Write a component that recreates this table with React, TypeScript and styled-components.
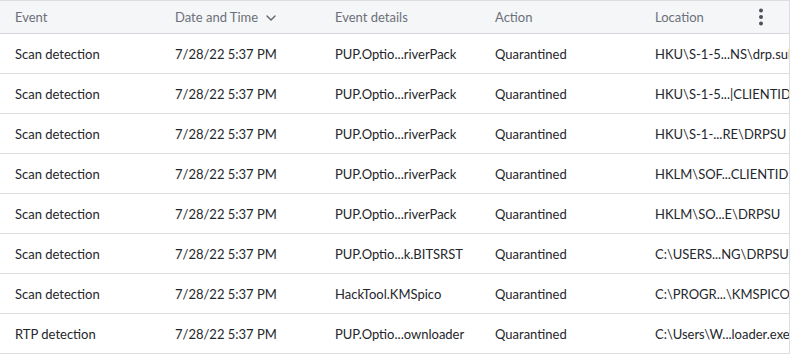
import React from 'react';
import styled, { createGlobalStyle } from 'styled-components';

const GlobalStyle = createGlobalStyle`
  html, body {
    margin: 0;
    padding: 0;
    background: #ffffff;
    font-family: Lato, 'Noto Sans', sans-serif;
  }
`;

type Row = {
  event: string;
  date: string;
  details: string;
  action: string;
  location: string;
};

const rows: Row[] = [
  { event: 'Scan detection', date: '7/28/22 5:37 PM', details: 'PUP.Optio...riverPack', action: 'Quarantined', location: 'HKU\\S-1-5...NS\\drp.sub' },
  { event: 'Scan detection', date: '7/28/22 5:37 PM', details: 'PUP.Optio...riverPack', action: 'Quarantined', location: 'HKU\\S-1-5...|CLIENTID' },
  { event: 'Scan detection', date: '7/28/22 5:37 PM', details: 'PUP.Optio...riverPack', action: 'Quarantined', location: 'HKU\\S-1-...RE\\DRPSU' },
  { event: 'Scan detection', date: '7/28/22 5:37 PM', details: 'PUP.Optio...riverPack', action: 'Quarantined', location: 'HKLM\\SOF...CLIENTID' },
  { event: 'Scan detection', date: '7/28/22 5:37 PM', details: 'PUP.Optio...riverPack', action: 'Quarantined', location: 'HKLM\\SO...E\\DRPSU' },
  { event: 'Scan detection', date: '7/28/22 5:37 PM', details: 'PUP.Optio...k.BITSRST', action: 'Quarantined', location: 'C:\\USERS...NG\\DRPSU' },
  { event: 'Scan detection', date: '7/28/22 5:37 PM', details: 'HackTool.KMSpico', action: 'Quarantined', location: 'C:\\PROGR...\\KMSPICO' },
  { event: 'RTP detection', date: '7/28/22 5:37 PM', details: 'PUP.Optio...ownloader', action: 'Quarantined', location: 'C:\\Users\\W...loader.exe' },
];

function App() {
  return (
    <>
      <GlobalStyle />
      <Table>
        <HeaderRow>
          <HeadCell>Event</HeadCell>
          <HeadCell>
            Date and Time
            <Chevron width="10" height="6" viewBox="0 0 10 6">
              <path d="M1 1l4 4 4-4" fill="none" stroke="#5f636c" strokeWidth="1.4" strokeLinecap="round" strokeLinejoin="round" />
            </Chevron>
          </HeadCell>
          <HeadCell>Event details</HeadCell>
          <HeadCell>Action</HeadCell>
          <HeadCell>Location</HeadCell>
          <Kebab>
            <svg width="6" height="18" viewBox="0 0 6 18">
              <circle cx="3" cy="2.5" r="2" fill="#4d5159" />
              <circle cx="3" cy="9" r="2" fill="#4d5159" />
              <circle cx="3" cy="15.5" r="2" fill="#4d5159" />
            </svg>
          </Kebab>
        </HeaderRow>
        {rows.map((r, i) => (
          <BodyRow key={i}>
            <Cell>{r.event}</Cell>
            <Cell>{r.date}</Cell>
            <Cell>{r.details}</Cell>
            <Cell>{r.action}</Cell>
            <Cell>{r.location}</Cell>
          </BodyRow>
        ))}
      </Table>
    </>
  );
}

export default App;

const Table = styled.div`
  width: 790px;
  box-sizing: border-box;
  border-top: 1px solid #dcdde2;
  border-right: 1px solid #dcdde2;
  overflow: hidden;
`;

const RowBase = styled.div`
  display: grid;
  grid-template-columns: 160px 160px 160px 160px 1fr;
  align-items: center;
  position: relative;
  box-sizing: border-box;
`;

const HeaderRow = styled(RowBase)`
  height: 33px;
  background: #f5f6f8;
  border-bottom: 1px solid #d6d7de;
`;

const BodyRow = styled(RowBase)`
  height: 40px;
  border-bottom: 1px solid #dcdde2;
`;

const HeadCell = styled.div`
  display: flex;
  align-items: center;
  padding-left: 15px;
  font-size: 13px;
  color: #6c7079;
  white-space: nowrap;
`;

const Chevron = styled.svg`
  margin-left: 8px;
  margin-top: 1px;
`;

const Cell = styled.div`
  padding-left: 15px;
  font-size: 13px;
  color: #24262b;
  white-space: nowrap;
  overflow: hidden;
`;

const Kebab = styled.div`
  position: absolute;
  left: 758px;
  top: 7px;
  display: flex;
`;
